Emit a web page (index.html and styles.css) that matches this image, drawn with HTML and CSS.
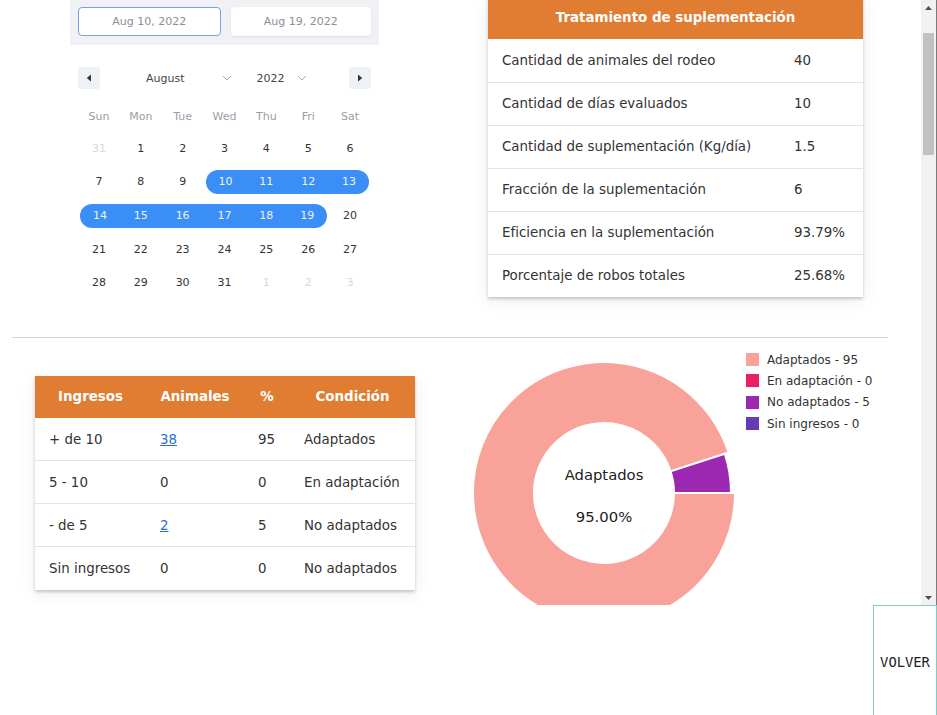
FILE: index.html
```html
<!DOCTYPE html>
<html lang="es">
<head>
<meta charset="utf-8">
<title>Suplementación</title>
<link rel="stylesheet" href="styles.css">
</head>
<body>
<div class="frame">
  <div class="viewport">
    <section class="top">
      <div class="calendar">
        <div class="range-inputs">
          <div class="date-input active">Aug 10, 2022</div>
          <div class="date-input">Aug 19, 2022</div>
        </div>
        <div class="nav">
          <button class="nav-btn" aria-label="Anterior"><svg width="6" height="8" viewBox="0 0 6 8"><path d="M5 0.5 L0.8 4 L5 7.5 Z" fill="#333"/></svg></button>
          <span class="month">August</span>
          <svg class="chev chev-month" width="10" height="6" viewBox="0 0 10 6"><path d="M1 1 L5 5 L9 1" fill="none" stroke="#a8adb5" stroke-width="1"/></svg>
          <span class="year">2022</span>
          <svg class="chev chev-year" width="10" height="6" viewBox="0 0 10 6"><path d="M1 1 L5 5 L9 1" fill="none" stroke="#a8adb5" stroke-width="1"/></svg>
          <button class="nav-btn next" aria-label="Siguiente"><svg width="6" height="8" viewBox="0 0 6 8"><path d="M1 0.5 L5.2 4 L1 7.5 Z" fill="#333"/></svg></button>
        </div>
        <div class="grid">
          <div class="wd">Sun</div><div class="wd">Mon</div><div class="wd">Tue</div><div class="wd">Wed</div><div class="wd">Thu</div><div class="wd">Fri</div><div class="wd">Sat</div>

          <div class="day other"><span class="d">31</span></div>
          <div class="day"><span class="d">1</span></div>
          <div class="day"><span class="d">2</span></div>
          <div class="day"><span class="d">3</span></div>
          <div class="day"><span class="d">4</span></div>
          <div class="day"><span class="d">5</span></div>
          <div class="day"><span class="d">6</span></div>

          <div class="day"><span class="d">7</span></div>
          <div class="day"><span class="d">8</span></div>
          <div class="day"><span class="d">9</span></div>
          <div class="day in start"><span class="d">10</span></div>
          <div class="day in"><span class="d">11</span></div>
          <div class="day in"><span class="d">12</span></div>
          <div class="day in end"><span class="d">13</span></div>

          <div class="day in start"><span class="d">14</span></div>
          <div class="day in"><span class="d">15</span></div>
          <div class="day in"><span class="d">16</span></div>
          <div class="day in"><span class="d">17</span></div>
          <div class="day in"><span class="d">18</span></div>
          <div class="day in end"><span class="d">19</span></div>
          <div class="day"><span class="d">20</span></div>

          <div class="day"><span class="d">21</span></div>
          <div class="day"><span class="d">22</span></div>
          <div class="day"><span class="d">23</span></div>
          <div class="day"><span class="d">24</span></div>
          <div class="day"><span class="d">25</span></div>
          <div class="day"><span class="d">26</span></div>
          <div class="day"><span class="d">27</span></div>

          <div class="day"><span class="d">28</span></div>
          <div class="day"><span class="d">29</span></div>
          <div class="day"><span class="d">30</span></div>
          <div class="day"><span class="d">31</span></div>
          <div class="day other"><span class="d">1</span></div>
          <div class="day other"><span class="d">2</span></div>
          <div class="day other"><span class="d">3</span></div>
        </div>
      </div>

      <div class="card supl">
        <table class="tbl">
          <colgroup><col class="c-label"><col class="c-value"></colgroup>
          <thead><tr><th colspan="2">Tratamiento de suplementación</th></tr></thead>
          <tbody>
            <tr><td>Cantidad de animales del rodeo</td><td>40</td></tr>
            <tr><td>Cantidad de días evaluados</td><td>10</td></tr>
            <tr><td>Cantidad de suplementación (Kg/día)</td><td>1.5</td></tr>
            <tr><td>Fracción de la suplementación</td><td>6</td></tr>
            <tr><td>Eficiencia en la suplementación</td><td>93.79%</td></tr>
            <tr><td>Porcentaje de robos totales</td><td>25.68%</td></tr>
          </tbody>
        </table>
      </div>
    </section>

    <div class="sep"></div>

    <section class="bottom">
      <div class="card ingresos">
        <table class="tbl">
          <colgroup><col class="c1"><col class="c2"><col class="c3"><col class="c4"></colgroup>
          <thead><tr><th>Ingresos</th><th>Animales</th><th>%</th><th>Condición</th></tr></thead>
          <tbody>
            <tr><td>+ de 10</td><td><a href="#">38</a></td><td>95</td><td>Adaptados</td></tr>
            <tr><td>5 - 10</td><td>0</td><td>0</td><td>En adaptación</td></tr>
            <tr><td>- de 5</td><td><a href="#">2</a></td><td>5</td><td>No adaptados</td></tr>
            <tr><td>Sin ingresos</td><td>0</td><td>0</td><td>No adaptados</td></tr>
          </tbody>
        </table>
      </div>

      <svg class="donut" width="280" height="290" viewBox="0 0 280 290">
        <path d="M 271 144 A 131 131 0 1 1 264.59 103.52 L 206.58 122.37 A 70 70 0 1 0 210 144 Z" fill="#f8a29a" stroke="#fff" stroke-width="2"/>
        <path d="M 267 144 L 210 144 A 70 70 0 0 0 206.58 122.37 L 260.79 104.76 A 127 127 0 0 1 267 144 Z" fill="#9c27b0" stroke="#fff" stroke-width="2"/>
        <text x="140" y="125" class="donut-label">Adaptados</text>
        <text x="140" y="167" class="donut-label">95.00%</text>
      </svg>

      <ul class="legend">
        <li><span class="sw sw-a"></span>Adaptados - 95</li>
        <li><span class="sw sw-b"></span>En adaptación - 0</li>
        <li><span class="sw sw-c"></span>No adaptados - 5</li>
        <li><span class="sw sw-d"></span>Sin ingresos - 0</li>
      </ul>
    </section>
  </div>
  <div class="scrollbar" aria-hidden="true">
    <div class="sb-btn"><svg width="7" height="4" viewBox="0 0 7 4"><path d="M0 4 L3.5 0 L7 4 Z" fill="#505050"/></svg></div>
    <div class="sb-track"><div class="sb-thumb"></div></div>
    <div class="sb-btn"><svg width="7" height="4" viewBox="0 0 7 4"><path d="M0 0 L3.5 4 L7 0 Z" fill="#505050"/></svg></div>
  </div>
</div>
<div class="footer">
  <button class="volver">VOLVER</button>
</div>
</body>
</html>
```

FILE: styles.css
```css
* { box-sizing: border-box; }
html, body { margin: 0; height: 100%; }
body {
  overflow: hidden;
  font-family: "DejaVu Sans", "Noto Sans", sans-serif;
  color: #333;
  background: #fff;
}

/* ---------- scroll frame ---------- */
.frame {
  display: flex;
  height: 605px;
  border-right: 1px solid #7a7a7a;
}
.viewport {
  flex: 1;
  min-width: 0;
  overflow: hidden;
}
.scrollbar {
  width: 15px;
  flex: none;
  display: flex;
  flex-direction: column;
  background: #f1f1f1;
}
.sb-btn {
  height: 15px;
  display: flex;
  align-items: center;
  justify-content: center;
}
.sb-track {
  flex: 1;
  padding-top: 18px;
}
.sb-thumb {
  height: 122px;
  margin: 0 2px;
  background: #c1c1c1;
}

/* ---------- top ---------- */
.top {
  display: flex;
  align-items: flex-start;
  gap: 109px;
  margin-top: -4px;
  padding-left: 70px;
}

.calendar {
  width: 309px;
  margin-top: 3px;
  font-size: 11px;
}
.range-inputs {
  display: flex;
  gap: 10px;
  background: #eff1f5;
  padding: 8px 8px 9px;
}
.date-input {
  flex: 1;
  height: 29px;
  display: flex;
  align-items: center;
  justify-content: center;
  background: #fff;
  color: #8a8f98;
  border-radius: 4px;
  box-shadow: 0 1px 2px rgba(0, 0, 0, 0.08);
}
.date-input.active {
  border: 1px solid #76a3e6;
  box-shadow: none;
}

.nav {
  display: flex;
  align-items: center;
  height: 22px;
  margin-top: 22px;
  padding: 0 8px;
  color: #444;
}
.nav-btn {
  width: 22px;
  height: 22px;
  padding: 0;
  border: 0;
  border-radius: 3px;
  background: #eef1f5;
  display: flex;
  align-items: center;
  justify-content: center;
}
.nav-btn.next { margin-left: auto; }
.month { margin-left: 46px; }
.chev-month { margin-left: 37px; }
.year { margin-left: 25px; }
.chev-year { margin-left: 12px; }

.grid {
  display: grid;
  grid-template-columns: repeat(7, 1fr);
  grid-template-rows: 32px repeat(5, 33.6px);
  margin-top: 11px;
  padding: 0 8px;
}
.wd {
  display: flex;
  align-items: center;
  justify-content: center;
  color: #9a9ea6;
}
.day {
  display: flex;
  align-items: center;
}
.day .d {
  flex: 1;
  height: 24px;
  line-height: 24px;
  text-align: center;
  color: #333;
}
.day.other .d { color: #d6d8dc; }
.day.in .d {
  background: #3a8ef6;
  color: #eaf2ff;
}
.day.start .d {
  margin-left: 2px;
  border-radius: 12px 0 0 12px;
}
.day.end .d {
  margin-right: 2px;
  border-radius: 0 12px 12px 0;
}

/* ---------- cards / tables ---------- */
.card {
  background: #fff;
  box-shadow: 0 2px 3px rgba(0, 0, 0, 0.2), 0 4px 18px rgba(0, 0, 0, 0.07);
}
.supl { width: 375px; }

.tbl {
  width: 100%;
  border-collapse: collapse;
  table-layout: fixed;
  font-size: 13.4px;
}
.tbl th {
  background: #e07d33;
  color: #fff;
  font-weight: bold;
  height: 43px;
  padding: 0;
  text-align: center;
}
.tbl td {
  height: 43px;
  padding: 0 14px;
  border-top: 1px solid #e4e4e4;
  color: #333;
  white-space: nowrap;
}
.tbl thead + tbody tr:first-child td { border-top: 0; }
.c-label { width: 292px; }
.c-value { width: 83px; }

.sep {
  height: 1px;
  background: #d3d3d3;
  margin: 37px 33px 0 12px;
}

/* ---------- bottom ---------- */
.bottom {
  display: flex;
  align-items: flex-start;
  padding: 11px 0 0 35px;
}
.ingresos {
  width: 380px;
  margin-top: 27px;
}
.ingresos .tbl th { height: 42px; }
.c1 { width: 111px; }
.c2 { width: 98px; }
.c3 { width: 46px; }
.c4 { width: 125px; }
.tbl a { color: #2a6fdb; text-decoration: underline; }

.donut {
  margin-left: 49px;
  flex: none;
}
.donut-label {
  font-family: "DejaVu Sans", sans-serif;
  font-size: 14.8px;
  fill: #222;
  text-anchor: middle;
  dominant-baseline: central;
}

.legend {
  list-style: none;
  margin: 0 0 0 2px;
  padding: 0;
  font-size: 12px;
  color: #333;
}
.legend li {
  display: flex;
  align-items: center;
  height: 21.3px;
  white-space: nowrap;
}
.sw {
  width: 13px;
  height: 13px;
  margin-right: 8px;
}
.sw-a { background: #f8a29a; }
.sw-b { background: #e91e63; }
.sw-c { background: #9c27b0; }
.sw-d { background: #673ab7; }

/* ---------- footer ---------- */
.footer {
  display: flex;
  justify-content: flex-end;
}
.volver {
  width: 64px;
  height: 113px;
  padding: 0;
  background: #fff;
  border: 1px solid #80cbc4;
  font-family: "DejaVu Sans Mono", monospace;
  font-size: 13.8px;
  color: #222;
}
```
